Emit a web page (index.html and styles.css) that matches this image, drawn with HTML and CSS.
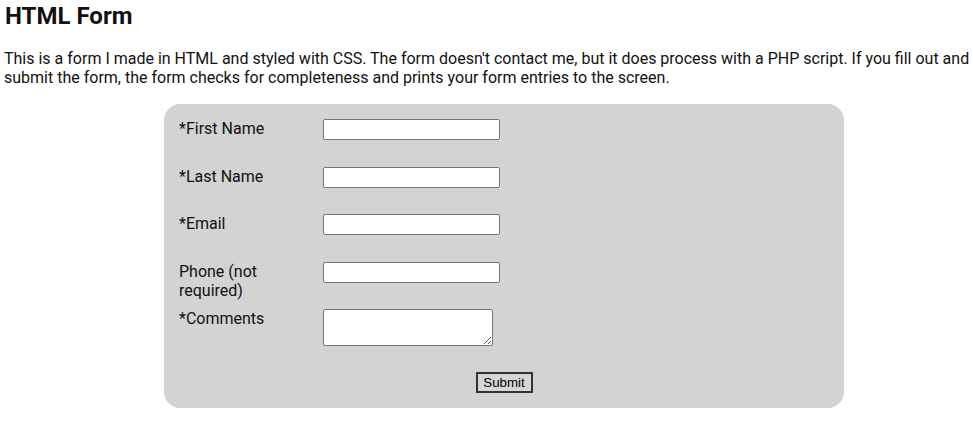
FILE: index.html
```html
<!DOCTYPE html>
<html lang="en">
<head>
<meta charset="utf-8">
<title>HTML Form</title>
<link rel="stylesheet" href="styles.css">
</head>
<body>
<h2 class="title">HTML Form</h2>
<p class="intro">This is a form I made in HTML and styled with CSS. The form doesn't contact me, but it does process with a PHP script. If you fill out and submit the form, the form checks for completeness and prints your form entries to the screen.</p>
<form class="card">
  <div class="row">
    <label class="label" for="fn">*First Name</label>
    <input class="field" id="fn" type="text">
  </div>
  <div class="row">
    <label class="label" for="ln">*Last Name</label>
    <input class="field" id="ln" type="text">
  </div>
  <div class="row">
    <label class="label" for="em">*Email</label>
    <input class="field" id="em" type="text">
  </div>
  <div class="row">
    <label class="label" for="ph">Phone (not required)</label>
    <input class="field" id="ph" type="text">
  </div>
  <div class="row row-last">
    <label class="label" for="cm">*Comments</label>
    <textarea class="area" id="cm"></textarea>
  </div>
  <div class="actions">
    <button class="submit" type="button">Submit</button>
  </div>
</form>
</body>
</html>
```
FILE: styles.css
```css
body {
  margin: 4px;
  font-family: Roboto, "Liberation Sans", Arial, sans-serif;
  color: #111;
  background: #fff;
}
.title {
  margin: -2px 0 19px 1px;
  font-size: 24px;
  font-weight: 700;
  line-height: 28px;
}
.intro {
  margin: 0 -6px 17px 0;
  font-size: 16px;
  line-height: 19px;
}
.card {
  margin: 0 0 0 160px;
  width: 680px;
  box-sizing: border-box;
  padding: 15px;
  background: #d3d3d3;
  border-radius: 16px;
  display: flex;
  flex-direction: column;
  gap: 9px;
}
.row {
  display: flex;
  align-items: flex-start;
  min-height: 38.5px;
}
.row-last {
  min-height: 37px;
}
.label {
  width: 130px;
  margin-right: 14px;
  font-size: 16px;
  line-height: 19px;
  color: #111;
}
.field {
  width: 177px;
  height: 21px;
  box-sizing: border-box;
  margin: 0;
  padding: 1px 2px;
  border: 1px solid #767676;
  border-radius: 2px;
  background: #fff;
}
.area {
  width: 170px;
  height: 37px;
  box-sizing: border-box;
  margin: 0;
  border: 1px solid #767676;
  border-radius: 2px;
  background: #fff;
}
.actions {
  display: flex;
  justify-content: center;
  padding-top: 17px;
}
.submit {
  width: 57px;
  height: 21px;
  box-sizing: border-box;
  padding: 0;
  font-family: "Liberation Sans", Arial, sans-serif;
  font-size: 13.33px;
  color: #000;
  background: #d6d6d6;
  border: 2px solid #333;
  border-radius: 0;
}
```
